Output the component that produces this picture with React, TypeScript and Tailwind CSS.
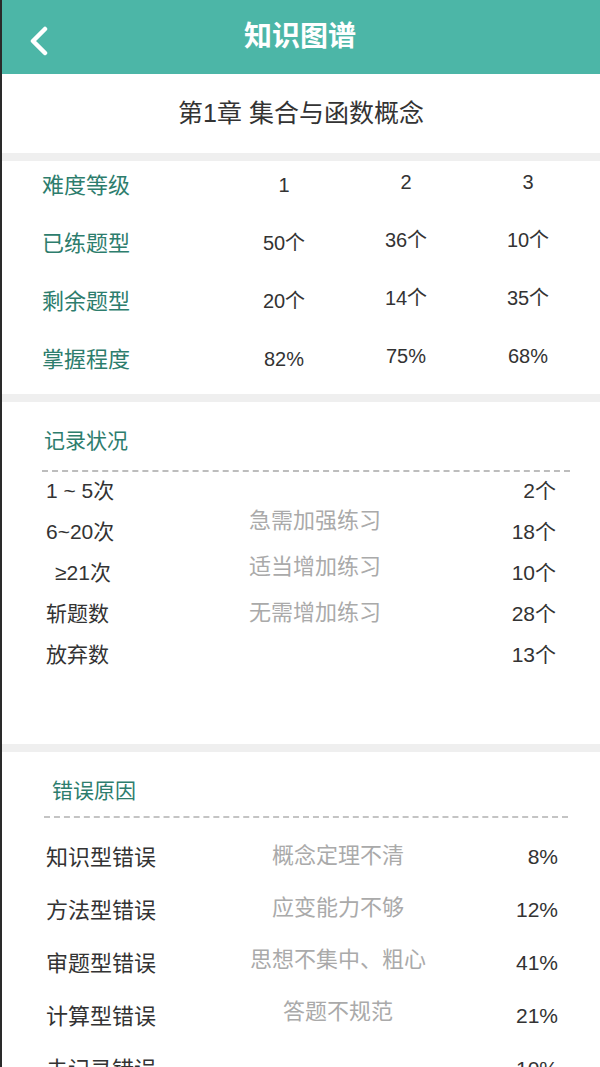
import React from "react";

const font = { fontFamily: '"Liberation Sans", "Noto Sans CJK SC", sans-serif' };

const levels = [
    { label: "难度等级", values: ["1", "2", "3"] },
    { label: "已练题型", values: ["50个", "36个", "10个"] },
    { label: "剩余题型", values: ["20个", "14个", "35个"] },
    { label: "掌握程度", values: ["82%", "75%", "68%"] },
];

const records = [
    { label: "1 ~ 5次", count: "2个" },
    { label: "6~20次", count: "18个" },
    { label: "≥21次", count: "10个", indent: true },
    { label: "斩题数", count: "28个" },
    { label: "放弃数", count: "13个" },
];

const advice = ["急需加强练习", "适当增加练习", "无需增加练习"];

const errors = [
    { label: "知识型错误", reason: "概念定理不清", rate: "8%" },
    { label: "方法型错误", reason: "应变能力不够", rate: "12%" },
    { label: "审题型错误", reason: "思想不集中、粗心", rate: "41%" },
    { label: "计算型错误", reason: "答题不规范", rate: "21%" },
    { label: "未记录错误", reason: "", rate: "10%" },
];

const Divider = () => <div className="h-2 bg-[#efefef]" />;

export default function App() {
    return (
        <div className="w-[600px] h-[1067px] overflow-hidden bg-white border-l-2 border-[#2a2a2a]" style={font}>
            {/* header */}
            <div className="h-[74px] bg-[#4cb6a7] flex items-center relative">
                <svg className="absolute left-[26px] top-[26px]" width="22" height="30" viewBox="0 0 22 30">
                    <path d="M17 3 L5 15 L17 27" fill="none" stroke="#fff" strokeWidth="4.5" strokeLinecap="round" strokeLinejoin="round" />
                </svg>
                <div className="flex-1 text-center text-white text-[28px] font-bold tracking-[0px] -ml-[2px]">知识图谱</div>
            </div>

            <div className="h-[79px] flex items-center justify-center text-[25px] text-[#333] pt-[1px]">
                第1章 集合与函数概念
            </div>
            <Divider />

            {/* levels */}
            <div className="pl-[40px] pt-[4px] pb-[15px] flex flex-col gap-[18px]">
                {levels.map((row) => (
                    <div key={row.label} className="grid grid-cols-[181px_122px_122px_122px] h-[40px] items-center">
                        <div className="text-[22px] text-[#2d7d6d]">{row.label}</div>
                        {row.values.map((v, i) => (
                            <div
                                key={i}
                                className={"text-center text-[20px] text-[#333] " + (i === 0 ? "" : "-mt-[6px]")}
                            >
                                {v}
                            </div>
                        ))}
                    </div>
                ))}
            </div>
            <Divider />

            {/* records */}
            <div className="h-[342px] px-[40px] pt-[24px]">
                <div className="h-[30px] flex items-center text-[21px] text-[#2d7d6d] pl-[2px]">记录状况</div>
                <div className="mt-[14px] border-t-2 border-dashed border-[#bdbdbd] mr-[-10px]" />
                <div className="grid grid-cols-[160px_1fr_120px] text-[21px] mt-[4px]">
                    <div className="flex flex-col gap-[11px]">
                        {records.map((r) => (
                            <div key={r.label} className={"h-[30px] flex items-center text-[#333] " + (r.indent ? "pl-[13px]" : "pl-[4px]")}>
                                {r.label}
                            </div>
                        ))}
                    </div>
                    <div className="flex flex-col gap-[16px] pt-[29px] items-center pr-[12px]">
                        {advice.map((a) => (
                            <div key={a} className="h-[30px] flex items-center text-[22px] text-[#aaaaaa]">{a}</div>
                        ))}
                    </div>
                    <div className="flex flex-col gap-[11px] items-end pr-[4px]">
                        {records.map((r) => (
                            <div key={r.label} className="h-[30px] flex items-center text-[#333]">{r.count}</div>
                        ))}
                    </div>
                </div>
            </div>
            <Divider />

            {/* errors */}
            <div className="px-[40px] pt-[24px]">
                <div className="h-[30px] flex items-center text-[21px] text-[#2d7d6d] pl-[10px]">错误原因</div>
                <div className="mt-[10px] border-t-2 border-dashed border-[#c4c4c4] mr-[-8px] ml-[2px]" />
                <div className="grid grid-cols-[160px_1fr_120px] text-[22px] mt-[24px]">
                    <div className="flex flex-col gap-[23px]">
                        {errors.map((e) => (
                            <div key={e.label} className="h-[30px] flex items-center text-[#333] pl-[4px]">{e.label}</div>
                        ))}
                    </div>
                    <div className="flex flex-col gap-[22px] -mt-[2px] items-center pl-[34px]">
                        {errors.map((e) => (
                            <div key={e.label} className="h-[30px] flex items-center text-[22px] whitespace-nowrap text-[#aaaaaa]">{e.reason}</div>
                        ))}
                    </div>
                    <div className="flex flex-col gap-[23px] items-end pr-[2px]">
                        {errors.map((e) => (
                            <div key={e.label} className="h-[30px] flex items-center text-[21px] text-[#333]">{e.rate}</div>
                        ))}
                    </div>
                </div>
            </div>
        </div>
    );
}
